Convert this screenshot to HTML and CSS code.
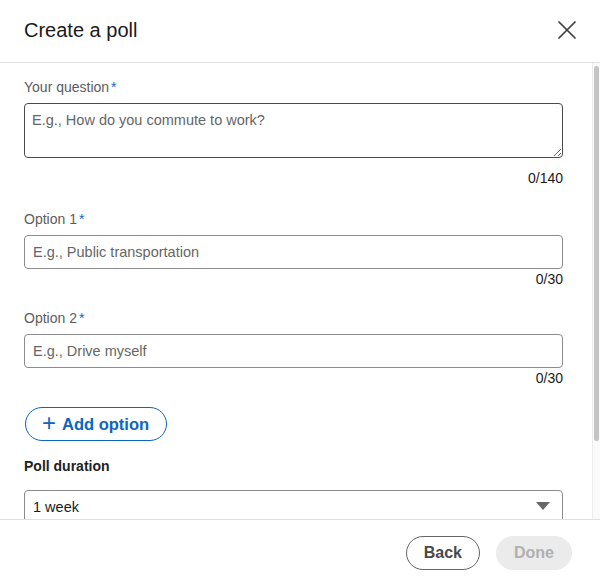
FILE: index.html
```html
<!DOCTYPE html>
<html lang="en">
<head>
<meta charset="utf-8">
<title>Create a poll</title>
<link rel="stylesheet" href="styles.css">
</head>
<body>
<div class="modal">
  <header class="modal-header">
    <h2 class="modal-title">Create a poll</h2>
    <button class="close-btn" aria-label="Dismiss">
      <svg width="20" height="20" viewBox="0 0 20 20"><path d="M2 2 L18 18 M18 2 L2 18" stroke="#3d3d3d" stroke-width="1.7" fill="none" stroke-linecap="round"/></svg>
    </button>
  </header>
  <div class="modal-main">
    <div class="modal-body">
      <div class="field">
        <label class="label">Your question<span class="req">*</span></label>
        <textarea class="textarea" placeholder="E.g., How do you commute to work?"></textarea>
        <div class="counter counter-q">0/140</div>
      </div>
      <div class="field">
        <label class="label">Option 1<span class="req">*</span></label>
        <input class="input" placeholder="E.g., Public transportation">
        <div class="counter">0/30</div>
      </div>
      <div class="field">
        <label class="label">Option 2<span class="req">*</span></label>
        <input class="input" placeholder="E.g., Drive myself">
        <div class="counter">0/30</div>
      </div>
      <button class="add-btn"><span class="plus">+</span>Add option</button>
      <div class="label label-strong">Poll duration</div>
      <div class="select">
        <span>1 week</span>
        <svg class="caret" width="14" height="8" viewBox="0 0 14 8"><path d="M0 0 H14 L7 8 Z" fill="#666"/></svg>
      </div>
    </div>
    <div class="scrollbar"><div class="thumb"></div></div>
  </div>
  <footer class="modal-footer">
    <button class="btn btn-back">Back</button>
    <button class="btn btn-done" disabled>Done</button>
  </footer>
</div>
</body>
</html>
```
FILE: styles.css
```css
* { box-sizing: border-box; }
html, body { margin: 0; padding: 0; background: #fff; }
body {
  font-family: "Liberation Sans", Arial, sans-serif;
  color: #000;
  width: 600px;
  height: 580px;
  overflow: hidden;
}
.modal {
  display: flex;
  flex-direction: column;
  height: 580px;
}
.modal-header {
  height: 63px;
  flex: none;
  display: flex;
  align-items: center;
  justify-content: space-between;
  padding: 0 24px 2px 24px;
  border-bottom: 1px solid #e0e0e0;
}
.modal-title {
  margin: 0;
  font-size: 20px;
  font-weight: 400;
  color: #1a1a1a;
}
.close-btn {
  border: 0;
  background: none;
  padding: 0;
  width: 20px;
  height: 20px;
  margin-right: -1px;
  display: flex;
}
.modal-main {
  flex: 1;
  min-height: 0;
  display: flex;
}
.modal-body {
  flex: 1;
  overflow: hidden;
  padding: 14px 29px 0 24px;
}
.scrollbar {
  flex: none;
  width: 8px;
  background: #fafafa;
  border-left: 1px solid #ececec;
  padding: 3px 1px 0 1px;
}
.thumb {
  height: 375px;
  background: #c4c4c4;
  border-radius: 3px;
}
.field { display: flex; flex-direction: column; }
.label {
  font-size: 14px;
  line-height: 20px;
  color: #5c5c5c;
  margin-bottom: 6px;
}
.req { color: #0a66c2; margin-left: 2px; }
.label-strong {
  color: #222;
  font-weight: 700;
  margin-top: 15px;
  margin-bottom: 14px;
}
.textarea {
  height: 55px;
  border: 1.5px solid #4a4a4a;
  border-radius: 4px;
  padding: 6px 7px;
  font-family: inherit;
  font-size: 14.5px;
  line-height: 20px;
  resize: vertical;
  outline: none;
}
.input {
  height: 34px;
  border: 1px solid #8c8c8c;
  border-radius: 4px;
  padding: 0 8px;
  font-family: inherit;
  font-size: 14.5px;
  outline: none;
}
.textarea::placeholder, .input::placeholder { color: #666; }
.counter {
  text-align: right;
  font-size: 14px;
  line-height: 20px;
  color: #1a1a1a;
  margin-bottom: 19px;
}
.counter-q { margin-top: 10px; margin-bottom: 21px; }
.add-btn {
  display: inline-flex;
  align-items: center;
  height: 34px;
  margin-top: 0;
  margin-left: 1px;
  padding: 0 17px 0 16px;
  border: 1px solid #0a66c2;
  border-radius: 17px;
  background: #fff;
  color: #0a66c2;
  font-family: inherit;
  font-size: 16.5px;
  font-weight: 700;
}
.plus {
  font-size: 24px;
  font-weight: 400;
  margin-right: 6px;
  line-height: 1;
  position: relative;
  top: -1px;
}
.select {
  height: 34px;
  border: 1px solid #8c8c8c;
  border-radius: 4px;
  padding: 0 12px 0 8px;
  display: flex;
  align-items: center;
  justify-content: space-between;
  font-size: 14.5px;
  color: #1a1a1a;
}
.caret { margin-top: -3px; }
.modal-footer {
  height: 61px;
  flex: none;
  border-top: 1px solid #e0e0e0;
  display: flex;
  justify-content: flex-end;
  align-items: flex-start;
  gap: 16px;
  padding: 16px 28px 0 0;
}
.btn {
  height: 34px;
  border-radius: 17px;
  font-family: inherit;
  font-size: 16px;
  font-weight: 700;
  padding: 0 17px;
}
.btn-back {
  background: #fff;
  border: 1px solid #666;
  color: #4a4a4a;
}
.btn-done {
  background: #ebebeb;
  border: 1px solid #ebebeb;
  color: #b0b0b0;
}
```
